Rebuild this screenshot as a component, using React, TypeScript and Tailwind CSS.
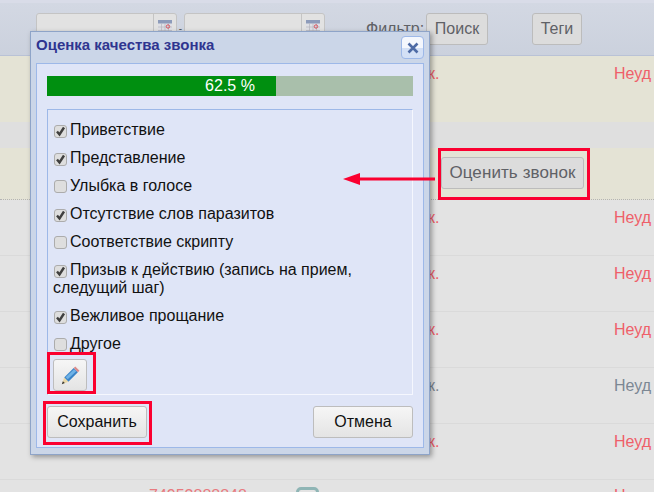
const checks = [
  { label: 'Приветствие', on: true },
  { label: 'Представление', on: true },
  { label: 'Улыбка в голосе', on: false },
  { label: 'Отсутствие слов паразитов', on: true },
  { label: 'Соответствие скрипту', on: false },
  { label: 'Призыв к действию (запись на прием, следущий шаг)', on: true },
  { label: 'Вежливое прощание', on: true },
  { label: 'Другое', on: false },
]

const rows = [false, false, false, true, false]

function Box({ on }: { on: boolean }) {
  return (
    <span className="inline-flex w-[13px] h-[13px] mr-[3px] ml-[1px] align-[-2px] rounded-[3px] border border-[#acacac] bg-[#dedede] items-center justify-center">
      {on && (
        <svg width="11" height="11" viewBox="0 0 11 11">
          <path d="M2 5.5 L4.5 8.5 L9 1.5" fill="none" stroke="#3f3f3f" strokeWidth="2.4" />
        </svg>
      )}
    </span>
  )
}

function DateInput({ className }: { className: string }) {
  return (
    <div className={`flex w-[141px] h-[40px] rounded-t-[3px] border border-[#c4c4c4] bg-[#e2e2e2] ${className}`}>
      <div className="flex-1" />
      <div className="w-[23px] border-l border-[#c4c4c4] pl-[4px] pt-[6px]">
        <svg width="14" height="14" viewBox="0 0 14 14">
          <rect x="0" y="0" width="14" height="14" fill="#dfe0e6" />
          <rect x="0" y="0" width="14" height="3.5" fill="#8d9bba" />
          <path d="M0 7h14M0 10.5h14M3.5 3.5v11M7 3.5v11M10.5 3.5v11" stroke="#b5b5bd" strokeWidth="0.7" />
          <circle cx="10" cy="6.5" r="1.7" fill="none" stroke="#d9525f" />
        </svg>
      </div>
    </div>
  )
}

function Btn({ children, className }: { children: React.ReactNode; className: string }) {
  return (
    <button className={`h-[32px] rounded-[3px] border border-[#bdbdbd] bg-gradient-to-b from-[#f6f6f6] to-[#e4e4e4] text-[#111] text-[16px] ${className}`}>
      {children}
    </button>
  )
}

function PageBg() {
  return (
    <div className="h-[492px] overflow-hidden">
      <div className="h-[56px] bg-gradient-to-b from-[#d3d8e3] to-[#cbd1dd] border-t-[3px] border-[#d9dce8] pt-[10px] flex text-[#5f6166] border-b border-b-[#b9c2d6]">
        <DateInput className="ml-[36px]" />
        <span className="w-[7px] text-[#555] text-[10px] pt-[8px] text-center">-</span>
        <DateInput className="" />
        <span className="ml-[41px] pt-[4px] text-[16px] w-[60px]">Фильтр:</span>
        <button className="w-[62px] h-[32px] rounded-[3px] border border-[#bcbcbc] bg-[#dcdcdc] text-[16px]">Поиск</button>
        <button className="ml-[44px] w-[50px] h-[32px] rounded-[3px] border border-[#bcbcbc] bg-[#dcdcdc] text-[16px]">Теги</button>
      </div>
      <div className="h-[66px] bg-[#e4e3d5] pl-[428px] pt-[6px] flex text-[16px] text-[#ef6069]">
        <span className="w-[186px]">к.</span>
        <span>Неуд</span>
      </div>
      <div className="h-[26px] bg-[#dfdfdf]" />
      <div className="h-[52px] bg-[#e4e3d5] border-b border-dotted border-[#b4b4b4] pl-[441px] pt-[9px]">
        <button className="w-[143px] h-[32px] rounded-[3px] border border-[#bcbcbc] bg-[#dcdcdc] text-[17px] tracking-[0.1px] text-[#5f6166]">Оценить звонок</button>
      </div>
      {rows.map((gray, i) => (
        <div key={i} className={`h-[56px] border-b border-[#dadada] pl-[428px] pt-[6px] flex text-[16px] ${gray ? 'text-[#7c8793]' : 'text-[#ef6069]'}`}>
          <span className="w-[186px]">к.</span>
          <span>Неуд</span>
        </div>
      ))}
      <div className="flex pl-[149px] pt-[4px] text-[16px] leading-[24px] text-[#e87a7f]">
        <span className="w-[147px]">74953888848</span>
        <span className="w-[23px] h-[22px] mt-[3px] rounded-[5px] border-[3px] border-[#8fb5b5]" />
        <span className="ml-[76px]">о</span>
        <span className="ml-[210px] text-[#ef6069]">Н</span>
      </div>
    </div>
  )
}

function Dialog() {
  return (
    <div className="absolute left-[30px] top-[31px] w-[400px] h-[424px] border border-[#8ea4c8] bg-[#cbd6e8] shadow-[2px_2px_5px_rgba(0,0,0,0.35)] px-[5px] pb-[6px] flex flex-col">
      <div className="h-[31px] shrink-0 flex items-start justify-between">
        <span className="mt-[4px] text-[15px] leading-[18px] font-bold text-[#2f3590]">Оценка качества звонка</span>
        <button className="w-[23px] h-[23px] mt-[4px] rounded-[4px] border border-[#9db8e8] bg-gradient-to-b from-[#f4f7fd] from-50% to-[#d3e0f6] to-50% flex items-center justify-center">
          <svg width="12" height="12" viewBox="0 0 12 12">
            <path d="M1.5 1.5 L10.5 10.5 M10.5 1.5 L1.5 10.5" stroke="#4d6aa5" strokeWidth="2.6" />
          </svg>
        </button>
      </div>
      <div className="flex-1 border border-[#9db8e8] bg-[#dfe5f7] px-[10px] pt-[12px]">
        <div className="relative h-[20px] bg-[#a9bfab]">
          <div className="w-[229px] h-[20px] bg-[#008f10]" />
          <div className="absolute inset-0 text-white text-[16px] leading-[20px] text-center">62.5 %</div>
        </div>
        <div className="mt-[13px] h-[286px] border border-[#9db8e8] border-r-[#f5f7fe] border-b-[#f5f7fe] pl-[5px] pt-[11px] text-[16px] text-[#111]">
          {checks.map(c => (
            <div key={c.label} className="mb-[10px] leading-[18px]">
              <Box on={c.on} />
              {c.label}
            </div>
          ))}
          <button className="w-[34px] h-[32px] -mt-[4px] rounded-[3px] border border-[#bdbdbd] bg-gradient-to-b from-[#f6f6f6] to-[#e4e4e4] flex items-center justify-center">
            <svg width="19" height="19" viewBox="0 0 18 18">
              <path d="M3 11 L12 2 L16 6 L7 15 Z" fill="#3a83c6" />
              <path d="M4.4 10.6 L12.4 3 L14.4 5 L6.4 12.6 Z" fill="#6fb2e6" />
              <path d="M12 2 L13.5 0.5 L17.5 4.5 L16 6 Z" fill="#d98a8a" />
              <path d="M3 11 L7 15 L0.8 17.2 Z" fill="#e8d7a6" />
              <path d="M1.8 14.4 L3.6 16.2 L0.8 17.2 Z" fill="#333" />
            </svg>
          </button>
        </div>
        <div className="mt-[11px] flex justify-between">
          <Btn className="w-[100px]">Сохранить</Btn>
          <Btn className="w-[100px]">Отмена</Btn>
        </div>
      </div>
    </div>
  )
}

function Annotations() {
  return (
    <>
      <div className="absolute left-[438px] top-[148px] w-[152px] h-[52px] border-[3px] border-[#fb0030]" />
      <div className="absolute left-[47px] top-[352px] w-[49px] h-[42px] border-[3px] border-[#fb0030]" />
      <div className="absolute left-[43px] top-[401px] w-[109px] h-[44px] border-[3px] border-[#fb0030]" />
      <svg className="absolute left-[340px] top-[170px]" width="100" height="18" viewBox="0 0 100 18">
        <path d="M20 9 H95" stroke="#fb0030" strokeWidth="3" />
        <path d="M3 9 L20 3 V15 Z" fill="#fb0030" />
      </svg>
    </>
  )
}

export default function App() {
  return (
    <div className="relative w-[654px] h-[492px] overflow-hidden bg-[#e3e3e3] font-['Liberation_Sans',Arial,sans-serif]">
      <PageBg />
      <Dialog />
      <Annotations />
    </div>
  )
}
